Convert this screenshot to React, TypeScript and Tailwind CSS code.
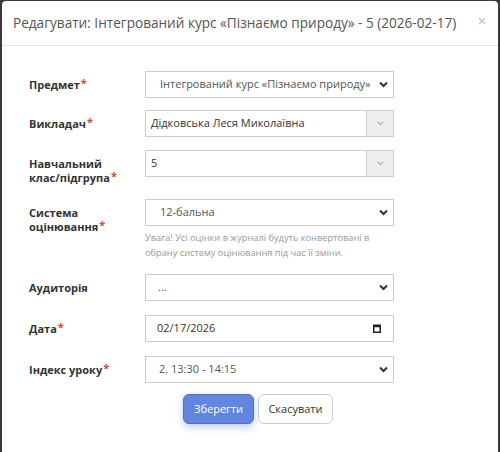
import React from 'react';

const Req = () => <span className="text-[#e8441c] text-[11px] relative -top-[2px] ml-[1px]">*</span>;

const Chevron = () => (
  <svg width="9" height="7" viewBox="0 0 9 7" className="shrink-0">
    <path d="M1 1.5 L4.5 5 L8 1.5" fill="none" stroke="#333" strokeWidth="2" />
  </svg>
);

const SmallChevron = () => (
  <svg width="7" height="5" viewBox="0 0 7 5">
    <path d="M0.8 1 L3.5 3.6 L6.2 1" fill="none" stroke="#888" strokeWidth="1" />
  </svg>
);

const Row = ({ label, mt, children }: { label: React.ReactNode; mt: string; children: React.ReactNode }) => (
  <div className={`flex items-start ${mt}`}>
    <div className="w-[116px] pt-[7px] pr-2 text-[11px] leading-[14px] font-bold text-[#333]">{label}</div>
    <div className="w-[249px]">{children}</div>
  </div>
);

const NativeSelect = ({ value, pl = 'pl-[14px]' }: { value: string; pl?: string }) => (
  <div className={`h-[27px] flex items-center justify-between border border-[#ccc] bg-white ${pl} pr-[5px]`}>
    <span className="text-[11px] text-[#555] truncate">{value}</span>
    <Chevron />
  </div>
);

const Select2 = ({ value }: { value: string }) => (
  <div className="h-[27px] flex border border-[#ccc] bg-white">
    <span className="flex-1 flex items-center pl-[5px] text-[11px] text-[#333]">{value}</span>
    <span className="w-[27px] flex items-center justify-center bg-[#eee] border-l border-[#ccc]">
      <SmallChevron />
    </span>
  </div>
);

export default function App() {
  return (
    <div className="min-h-[452px] h-[452px] overflow-hidden bg-[#3a3a3a] pt-[1px] pl-[2px]" style={{ fontFamily: '"Open Sans", "Noto Sans", sans-serif' }}>
      <div className="w-[496px] h-[460px] bg-white rounded-[4px]">
        {/* header */}
        <div className="h-[45px] flex items-center justify-between border-b border-[#e5e5e5] pl-[11px] pr-[12px]">
          <h4 className="text-[13.6px] text-[#555] leading-none">Редагувати: Інтегрований курс «Пізнаємо природу» - 5 (2026-02-17)</h4>
          <svg width="8" height="8" viewBox="0 0 8 8" className="-mt-[4px]">
            <path d="M1 1 L7 7 M7 1 L1 7" stroke="#c4c4c4" strokeWidth="1.4" />
          </svg>
        </div>

        {/* body */}
        <div className="pl-[27px] pt-[25px]">
          <Row label={<>Предмет<Req /></>} mt="mt-0">
            <NativeSelect value="Інтегрований курс «Пізнаємо природу»" />
          </Row>
          <Row label={<>Викладач<Req /></>} mt="mt-[12px]">
            <Select2 value="Дідковська Леся Миколаївна" />
          </Row>
          <Row label={<>Навчальний<br /><span className="whitespace-nowrap">клас/підгрупа<Req /></span></>} mt="mt-[13px]">
            <Select2 value="5" />
          </Row>
          <Row label={<>Система<br /><span className="whitespace-nowrap">оцінювання<Req /></span></>} mt="mt-[14px]">
            <NativeSelect value="12-бальна" />
            <p className="mt-[4px] text-[9.25px] leading-[15px] text-[#999]">
              Увага! Усі оцінки в журналі будуть конвертовані в обрану систему оцінювання під час її зміни.
            </p>
          </Row>
          <Row label="Аудиторія" mt="mt-[14px]">
            <NativeSelect value="..." pl="pl-[12px]" />
          </Row>
          <Row label={<>Дата<Req /></>} mt="mt-[14px]">
            <div className="h-[27px] flex items-center justify-between border border-[#ccc] bg-white pl-[11px] pr-[12px]">
              <span className="text-[11px] text-[#333]">02/17/2026</span>
              <svg width="8" height="9" viewBox="0 0 8 9">
                <rect x="0.75" y="1.25" width="6.5" height="7" fill="none" stroke="#222" strokeWidth="1.5" />
                <rect x="0.75" y="1.25" width="6.5" height="2" fill="#222" />
              </svg>
            </div>
          </Row>
          <Row label={<>Індекс уроку<Req /></>} mt="mt-[14px]">
            <NativeSelect value="2. 13:30 - 14:15" pl="pl-[13px]" />
          </Row>

          {/* buttons */}
          <div className="flex gap-[4px] mt-[11px] ml-[154px]">
            <button className="h-[30px] w-[71px] rounded-[6px] bg-[#6286df] border border-[#4b70c9] text-white text-[11px] shadow-[0_3px_8px_rgba(70,110,210,0.35)]">
              Зберегти
            </button>
            <button className="h-[30px] w-[75px] rounded-[6px] bg-white border border-[#ccc] text-[#333] text-[11px]">
              Скасувати
            </button>
          </div>
        </div>
      </div>
    </div>
  );
}
